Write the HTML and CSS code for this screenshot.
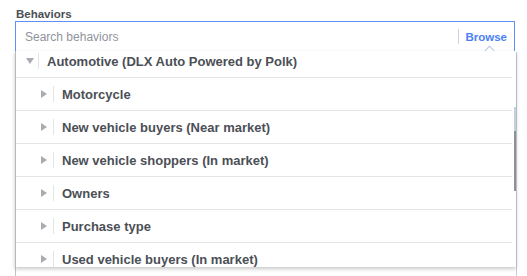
FILE: index.html
```html
<!DOCTYPE html>
<html lang="en">

<head>
  <meta charset="UTF-8">
  <title>Behaviors</title>
  <link rel="stylesheet" href="styles.css">
</head>

<body>
  <div class="field">
    <div class="label">Behaviors</div>
    <div class="search">
      <span class="placeholder">Search behaviors</span>
      <span class="sep"></span>
      <a class="browse">Browse</a>
    </div>
    <div class="under"></div>

    <div class="menu">
      <span class="notch"></span>
      <ul class="tree">
        <li class="row open"><span class="tri down"></span><span class="bar"></span>Automotive (DLX Auto Powered by Polk)</li>
        <li class="row child"><span class="tri"></span><span class="bar"></span>Motorcycle</li>
        <li class="row child"><span class="tri"></span><span class="bar"></span>New vehicle buyers (Near market)</li>
        <li class="row child"><span class="tri"></span><span class="bar"></span>New vehicle shoppers (In market)</li>
        <li class="row child"><span class="tri"></span><span class="bar"></span>Owners</li>
        <li class="row child"><span class="tri"></span><span class="bar"></span>Purchase type</li>
        <li class="row child"><span class="tri"></span><span class="bar"></span>Used vehicle buyers (In market)</li>
      </ul>
      <div class="thumb"></div>
    </div>
  </div>
</body>

</html>
```

FILE: styles.css
```css
body,
html {
  margin: 0;
  padding: 0;
  background: #fff;
}

body {
  font-family: "Liberation Sans", Arial, sans-serif;
  color: #4b4f56;
}

.field {
  position: relative;
  padding: 7px 0 0 15px;
  height: 269px;
}

.label {
  font-size: 11.5px;
  font-weight: bold;
  line-height: 14px;
  padding-left: 1px;
}

.search {
  display: flex;
  align-items: center;
  width: 498px;
  height: 29px;
  border: 1px solid #5d8ff6;
}

.placeholder {
  flex: 1;
  padding-left: 9px;
  font-size: 12px;
  color: #90949c;
}

.sep {
  width: 1px;
  height: 15px;
  background: #c9d3e6;
  margin-right: 6px;
}

.browse {
  font-size: 11.5px;
  font-weight: bold;
  color: #4a80f5;
  margin-right: 7px;
}

.under {
  height: 224px;
  width: 500px;
  border-left: 1px solid #c4c4c4;
  border-right: 1px solid #c3cde6;
}

.menu {
  position: absolute;
  top: 51px;
  left: 15px;
  width: 500px;
  height: 216px;
  background: #fff;
  border-left: 1px solid #b8b8b8;
  box-shadow: 0 2px 4px rgba(0, 0, 0, 0.22);
}

.notch {
  position: absolute;
  z-index: 1;
  top: -4px;
  left: 470px;
  width: 6px;
  height: 6px;
  background: #fff;
  border-left: 1px solid #b9c6e4;
  border-top: 1px solid #b9c6e4;
  transform: rotate(45deg);
}

.tree {
  list-style: none;
  margin: 0;
  padding: 0;
  height: 216px;
  overflow: hidden;
}

.row {
  display: flex;
  align-items: center;
  height: 32px;
  border-bottom: 1px solid #e3e4e6;
  font-size: 13px;
  font-weight: bold;
  margin-right: 4px;
}

.open {
  margin-top: -6px;
}

.open .bar {
  margin: 0 8px 0 4px;
}

.child {
  padding-left: 15px;
}

.tri {
  width: 0;
  height: 0;
  margin-left: 10px;
  border-top: 4px solid transparent;
  border-bottom: 4px solid transparent;
  border-left: 6px solid #a8abb0;
}

.tri.down {
  border-left: 4px solid transparent;
  border-right: 4px solid transparent;
  border-top: 6px solid #a8abb0;
  border-bottom: 0;
}

.bar {
  width: 1px;
  height: 16px;
  background: #e3e4e6;
  margin: 0 8px 0 6px;
}

.thumb {
  position: absolute;
  right: 0;
  top: 56px;
  width: 2px;
  height: 84px;
  background: linear-gradient(#c6cee0 0 28%, #8e9196 28% 100%);
}
```
